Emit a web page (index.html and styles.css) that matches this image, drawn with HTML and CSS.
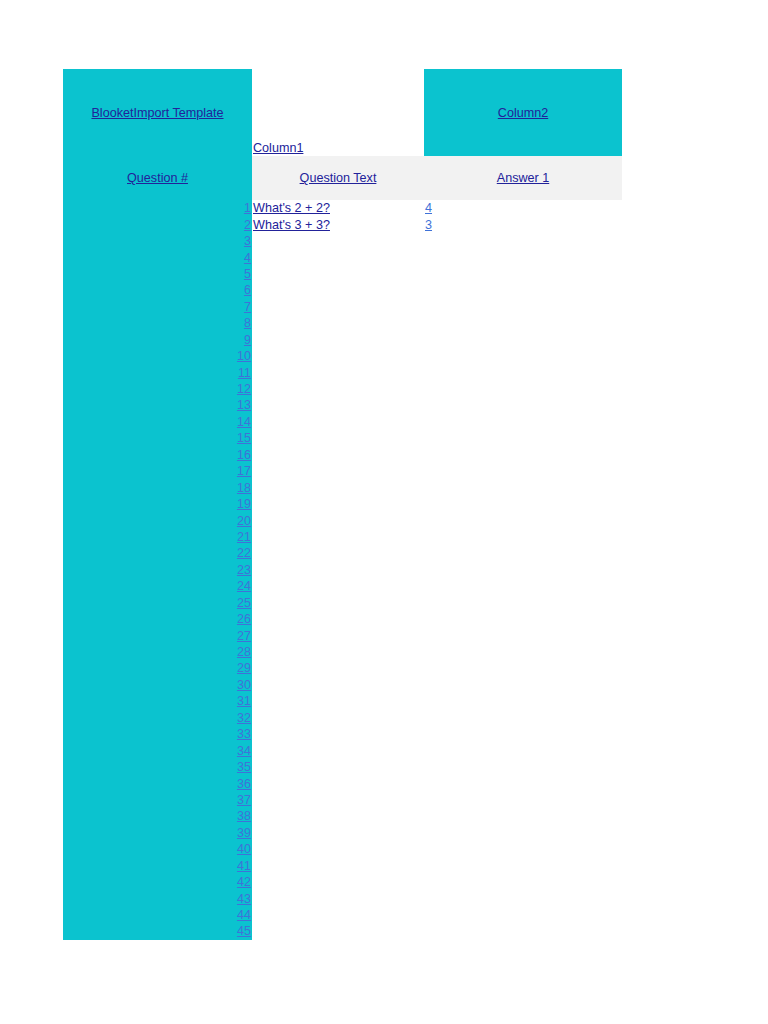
FILE: index.html
```html
<!DOCTYPE html>
<html>
<head>
<meta charset="utf-8">
<link rel="stylesheet" href="styles.css">
</head>
<body>
<div class="sheet">
  <div class="c c1 hero center"><a class="dk" href="#">BlooketImport Template</a></div>
  <div class="c c2 bottom"><a class="dk" href="#">Column1</a></div>
  <div class="c c3 hero center"><a class="dk" href="#">Column2</a></div>

  <div class="c c1 center"><a class="dk" href="#">Question #</a></div>
  <div class="c c2 grey center"><a class="dk" href="#">Question Text</a></div>
  <div class="c c3 grey center"><a class="dk" href="#">Answer 1</a></div>

  <div class="c c1 num"><a href="#">1</a></div><div class="c c2 txt"><a class="dk" href="#">What's 2 + 2?</a></div><div class="c c3 txt"><a href="#">4</a></div>
  <div class="c c1 num"><a href="#">2</a></div><div class="c c2 txt"><a class="dk" href="#">What's 3 + 3?</a></div><div class="c c3 txt"><a href="#">3</a></div>
  <div class="c c1 num"><a href="#">3</a></div><div class="c"></div><div class="c"></div>
  <div class="c c1 num"><a href="#">4</a></div><div class="c"></div><div class="c"></div>
  <div class="c c1 num"><a href="#">5</a></div><div class="c"></div><div class="c"></div>
  <div class="c c1 num"><a href="#">6</a></div><div class="c"></div><div class="c"></div>
  <div class="c c1 num"><a href="#">7</a></div><div class="c"></div><div class="c"></div>
  <div class="c c1 num"><a href="#">8</a></div><div class="c"></div><div class="c"></div>
  <div class="c c1 num"><a href="#">9</a></div><div class="c"></div><div class="c"></div>
  <div class="c c1 num"><a href="#">10</a></div><div class="c"></div><div class="c"></div>
  <div class="c c1 num"><a href="#">11</a></div><div class="c"></div><div class="c"></div>
  <div class="c c1 num"><a href="#">12</a></div><div class="c"></div><div class="c"></div>
  <div class="c c1 num"><a href="#">13</a></div><div class="c"></div><div class="c"></div>
  <div class="c c1 num"><a href="#">14</a></div><div class="c"></div><div class="c"></div>
  <div class="c c1 num"><a href="#">15</a></div><div class="c"></div><div class="c"></div>
  <div class="c c1 num"><a href="#">16</a></div><div class="c"></div><div class="c"></div>
  <div class="c c1 num"><a href="#">17</a></div><div class="c"></div><div class="c"></div>
  <div class="c c1 num"><a href="#">18</a></div><div class="c"></div><div class="c"></div>
  <div class="c c1 num"><a href="#">19</a></div><div class="c"></div><div class="c"></div>
  <div class="c c1 num"><a href="#">20</a></div><div class="c"></div><div class="c"></div>
  <div class="c c1 num"><a href="#">21</a></div><div class="c"></div><div class="c"></div>
  <div class="c c1 num"><a href="#">22</a></div><div class="c"></div><div class="c"></div>
  <div class="c c1 num"><a href="#">23</a></div><div class="c"></div><div class="c"></div>
  <div class="c c1 num"><a href="#">24</a></div><div class="c"></div><div class="c"></div>
  <div class="c c1 num"><a href="#">25</a></div><div class="c"></div><div class="c"></div>
  <div class="c c1 num"><a href="#">26</a></div><div class="c"></div><div class="c"></div>
  <div class="c c1 num"><a href="#">27</a></div><div class="c"></div><div class="c"></div>
  <div class="c c1 num"><a href="#">28</a></div><div class="c"></div><div class="c"></div>
  <div class="c c1 num"><a href="#">29</a></div><div class="c"></div><div class="c"></div>
  <div class="c c1 num"><a href="#">30</a></div><div class="c"></div><div class="c"></div>
  <div class="c c1 num"><a href="#">31</a></div><div class="c"></div><div class="c"></div>
  <div class="c c1 num"><a href="#">32</a></div><div class="c"></div><div class="c"></div>
  <div class="c c1 num"><a href="#">33</a></div><div class="c"></div><div class="c"></div>
  <div class="c c1 num"><a href="#">34</a></div><div class="c"></div><div class="c"></div>
  <div class="c c1 num"><a href="#">35</a></div><div class="c"></div><div class="c"></div>
  <div class="c c1 num"><a href="#">36</a></div><div class="c"></div><div class="c"></div>
  <div class="c c1 num"><a href="#">37</a></div><div class="c"></div><div class="c"></div>
  <div class="c c1 num"><a href="#">38</a></div><div class="c"></div><div class="c"></div>
  <div class="c c1 num"><a href="#">39</a></div><div class="c"></div><div class="c"></div>
  <div class="c c1 num"><a href="#">40</a></div><div class="c"></div><div class="c"></div>
  <div class="c c1 num"><a href="#">41</a></div><div class="c"></div><div class="c"></div>
  <div class="c c1 num"><a href="#">42</a></div><div class="c"></div><div class="c"></div>
  <div class="c c1 num"><a href="#">43</a></div><div class="c"></div><div class="c"></div>
  <div class="c c1 num"><a href="#">44</a></div><div class="c"></div><div class="c"></div>
  <div class="c c1 num"><a href="#">45</a></div><div class="c"></div><div class="c"></div>
</div>
</body>
</html>
```
FILE: styles.css
```css
html, body {
  margin: 0;
  padding: 0;
  background: #ffffff;
}
body {
  font-family: "Liberation Sans", Arial, sans-serif;
  font-size: 12.6px;
}
.sheet {
  display: grid;
  grid-template-columns: 189px 172px 198px;
  grid-template-rows: 87px 44px repeat(45, 16.44px);
  margin: 69px 0 0 63px;
  width: 559px;
}
.c {
  display: flex;
  min-width: 0;
  line-height: 16px;
  white-space: nowrap;
}
.c1 {
  background: #0bc3cf;
}
.hero {
  background: #0bc3cf;
}
.grey {
  background: #f2f2f2;
}
.center {
  align-items: center;
  justify-content: center;
}
.bottom {
  align-items: flex-end;
  padding: 0 0 0 1px;
}
.num {
  justify-content: flex-end;
  align-items: center;
  padding-right: 1px;
}
.txt {
  align-items: center;
  padding-left: 1px;
}
a {
  color: #3f72d8;
  text-decoration: underline;
}
a.dk {
  color: #22229a;
}
```
